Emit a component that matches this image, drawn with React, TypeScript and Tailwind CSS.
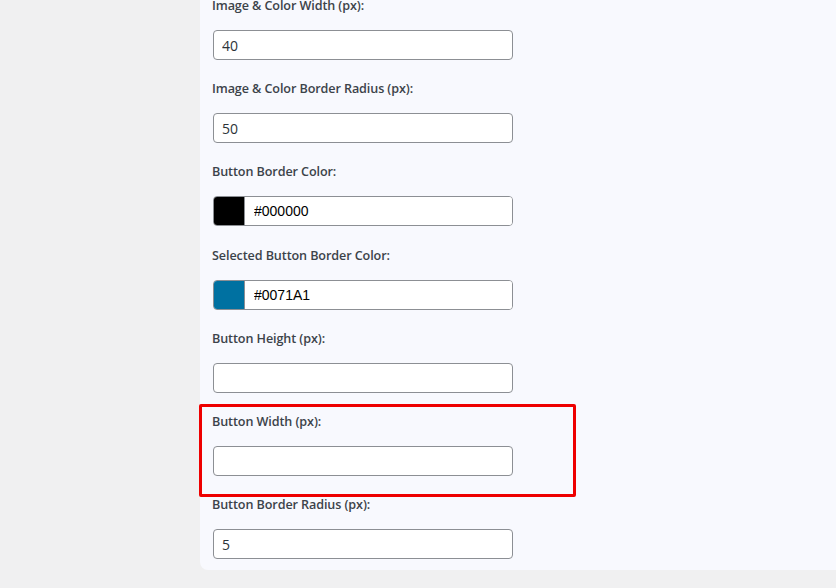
import React from 'react';

type Field = {
  label: string;
  value?: string;
  color?: string;
};

const fields: Field[] = [
  { label: 'Image & Color Width (px):', value: '40' },
  { label: 'Image & Color Border Radius (px):', value: '50' },
  { label: 'Button Border Color:', value: '#000000', color: '#000000' },
  { label: 'Selected Button Border Color:', value: '#0071A1', color: '#0071a1' },
  { label: 'Button Height (px):', value: '' },
  { label: 'Button Width (px):', value: '' },
  { label: 'Button Border Radius (px):', value: '5' },
];

function TextField({ label, value }: Field) {
  return (
    <div className="pb-[19.2px]">
      <label className="block h-5 text-[12.6px] leading-5 font-semibold tracking-[-0.1px] text-[#3c434a]">{label}</label>
      <input
        type="text"
        defaultValue={value}
        className="mt-[14px] ml-px block h-[30px] w-[300px] rounded-[4px] border border-[#8c8f94] bg-white px-2 text-sm text-[#2c3338] outline-none"
        style={{ fontFamily: '"Open Sans", "Noto Sans", sans-serif' }}
      />
    </div>
  );
}

function ColorField({ label, value, color }: Field) {
  return (
    <div className="pb-[19.2px]">
      <label className="block h-5 text-[12.6px] leading-5 font-semibold tracking-[-0.1px] text-[#3c434a]">{label}</label>
      <div className="mt-[14px] ml-px flex h-[30px] w-[300px] overflow-hidden rounded-[4px] border border-[#8c8f94] bg-white">
        <div className="w-[31px] border-r border-[#8c8f94]" style={{ backgroundColor: color }} />
        <input
          type="text"
          defaultValue={value}
          className="min-w-0 flex-1 bg-white pl-[9px] font-['Liberation_Sans',Arial,sans-serif] text-sm text-black outline-none"
        />
      </div>
    </div>
  );
}

export default function App() {
  return (
    <div className="h-[588px] w-[836px] overflow-hidden bg-[#f0f0f1] font-['Open_Sans','Noto_Sans',sans-serif]">
      <div className="ml-[200px] flex h-[570px] flex-col rounded-bl-lg bg-[#f8f9fe] pl-3">
        <div className="relative -mt-1">
          {fields.map((f) =>
            f.color ? <ColorField key={f.label} {...f} /> : <TextField key={f.label} {...f} />
          )}
          <div className="pointer-events-none absolute left-[-13px] top-[408px] h-[93px] w-[377px] rounded-[2px] border-[3px] border-[#ee0000]" />
        </div>
      </div>
    </div>
  );
}
